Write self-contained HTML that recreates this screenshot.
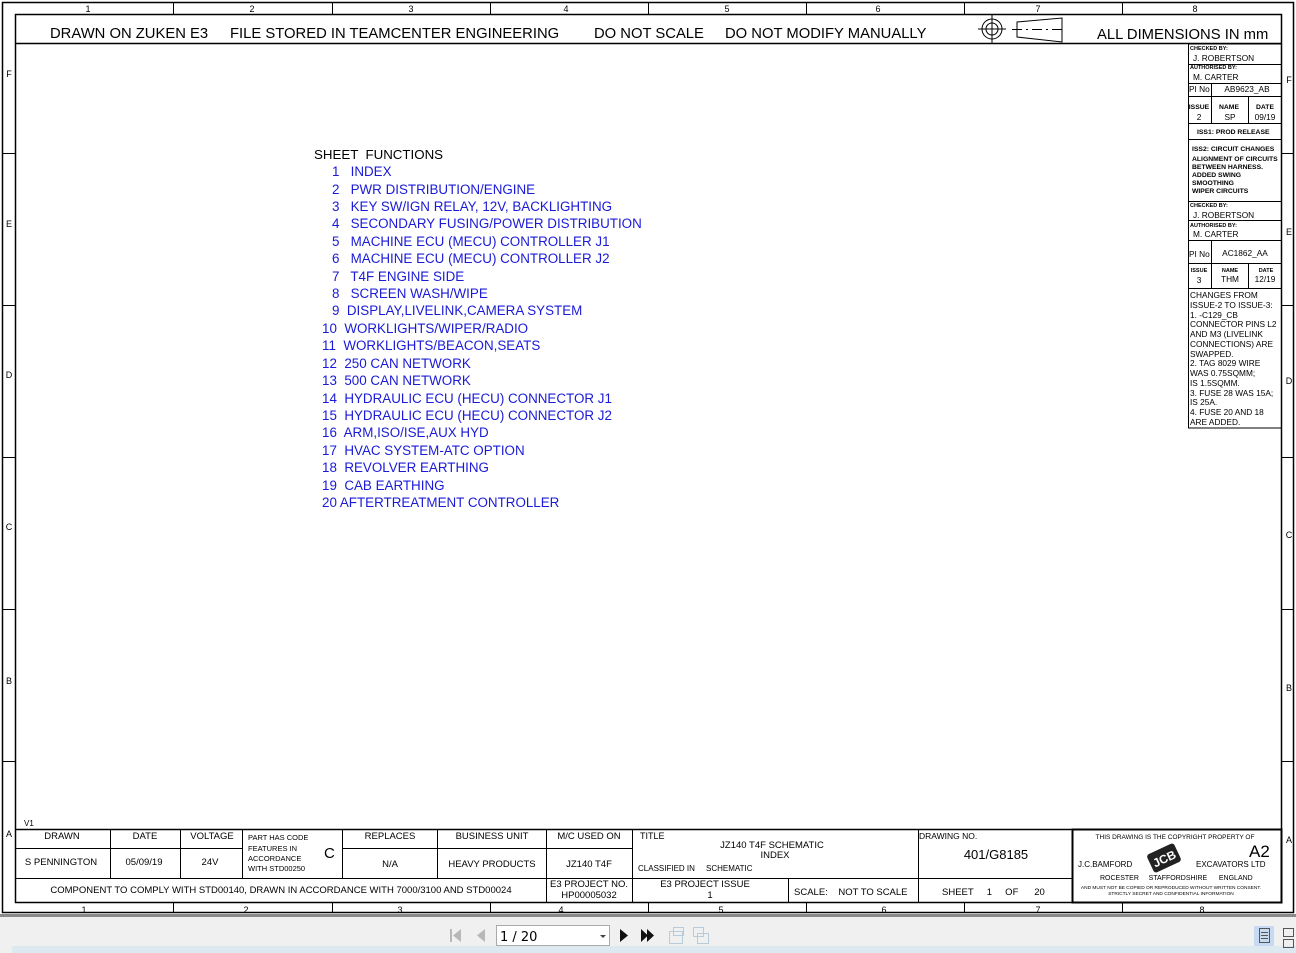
<!DOCTYPE html>
<html><head><meta charset="utf-8">
<style>
html,body{margin:0;padding:0;background:#fff;width:1296px;height:953px;overflow:hidden}
svg{display:block}
text{font-family:"Liberation Sans",Arial,sans-serif;fill:#000;white-space:pre}
.b text{fill:#1a1ad8}
</style></head><body>
<svg width="1296" height="953" viewBox="0 0 1296 953" xmlns="http://www.w3.org/2000/svg" xml:space="preserve">
<rect x="0" y="0" width="1296" height="953" fill="#fff"/>
<rect x="0" y="914" width="1296" height="39" fill="#f0f0f0"/>
<rect x="0" y="914" width="1296" height="3" fill="#8a8a8a"/>
<rect x="12" y="946" width="1284" height="7" fill="#dde9f1"/>
<g stroke="#000" fill="none">
<rect x="2.5" y="2.5" width="1291" height="910" stroke-width="1.5"/>
<rect x="15.5" y="14.5" width="1266" height="888" stroke-width="1.5"/>
<line x1="15" y1="43.5" x2="1282" y2="43.5" stroke-width="1.5"/>
<line x1="15" y1="829.5" x2="1282" y2="829.5" stroke-width="1.5"/>
<g stroke-width="1">
<line x1="173.5" y1="3" x2="173.5" y2="14"/><line x1="332.5" y1="3" x2="332.5" y2="14"/>
<line x1="490.5" y1="3" x2="490.5" y2="14"/><line x1="648.5" y1="3" x2="648.5" y2="14"/>
<line x1="806.5" y1="3" x2="806.5" y2="14"/><line x1="964.5" y1="3" x2="964.5" y2="14"/>
<line x1="1122.5" y1="3" x2="1122.5" y2="14"/>
<line x1="173.5" y1="902" x2="173.5" y2="912"/><line x1="332.5" y1="902" x2="332.5" y2="912"/>
<line x1="490.5" y1="902" x2="490.5" y2="912"/><line x1="648.5" y1="902" x2="648.5" y2="912"/>
<line x1="806.5" y1="902" x2="806.5" y2="912"/><line x1="964.5" y1="902" x2="964.5" y2="912"/>
<line x1="1122.5" y1="902" x2="1122.5" y2="912"/>
<line x1="3" y1="153.5" x2="15" y2="153.5"/><line x1="3" y1="305.5" x2="15" y2="305.5"/>
<line x1="3" y1="457.5" x2="15" y2="457.5"/><line x1="3" y1="609.5" x2="15" y2="609.5"/>
<line x1="3" y1="761.5" x2="15" y2="761.5"/>
<line x1="1282" y1="153.5" x2="1294" y2="153.5"/><line x1="1282" y1="305.5" x2="1294" y2="305.5"/>
<line x1="1282" y1="457.5" x2="1294" y2="457.5"/><line x1="1282" y1="609.5" x2="1294" y2="609.5"/>
<line x1="1282" y1="761.5" x2="1294" y2="761.5"/>
<line x1="15" y1="848.5" x2="242" y2="848.5"/>
<line x1="342" y1="848.5" x2="632" y2="848.5"/>
<line x1="15" y1="878.5" x2="1072" y2="878.5"/>
<line x1="110.5" y1="829" x2="110.5" y2="878"/><line x1="180.5" y1="829" x2="180.5" y2="878"/>
<line x1="242.5" y1="829" x2="242.5" y2="878"/><line x1="342.5" y1="829" x2="342.5" y2="878"/>
<line x1="437.5" y1="829" x2="437.5" y2="878"/><line x1="546.5" y1="829" x2="546.5" y2="902"/>
<line x1="632.5" y1="829" x2="632.5" y2="902"/><line x1="918.5" y1="829" x2="918.5" y2="902"/>
<line x1="788.5" y1="878" x2="788.5" y2="902"/>
<circle cx="992" cy="29" r="10"/><circle cx="992" cy="29" r="6"/>
<line x1="978" y1="29" x2="1006" y2="29"/><line x1="992" y1="15" x2="992" y2="43"/>
<path d="M1017 22 L1062 18 L1062 42 L1017 37 Z"/>
<line x1="1012" y1="29.5" x2="1066" y2="29.5" stroke-dasharray="10 4 2 4"/>
<rect x="1188.5" y="44" width="93" height="384"/>
<line x1="1188" y1="64.5" x2="1282" y2="64.5"/><line x1="1188" y1="83.5" x2="1282" y2="83.5"/>
<line x1="1188" y1="96.5" x2="1282" y2="96.5"/><line x1="1188" y1="123.5" x2="1282" y2="123.5"/>
<line x1="1188" y1="139.5" x2="1282" y2="139.5"/><line x1="1188" y1="201.5" x2="1282" y2="201.5"/>
<line x1="1188" y1="220.5" x2="1282" y2="220.5"/><line x1="1188" y1="240.5" x2="1282" y2="240.5"/>
<line x1="1188" y1="263.5" x2="1282" y2="263.5"/><line x1="1188" y1="288.5" x2="1282" y2="288.5"/>
<line x1="1211.5" y1="83" x2="1211.5" y2="123"/><line x1="1248.5" y1="96" x2="1248.5" y2="123"/>
<line x1="1211.5" y1="240" x2="1211.5" y2="288"/><line x1="1248.5" y1="263" x2="1248.5" y2="288"/>
</g>
<rect x="1072.5" y="829.5" width="209" height="73" stroke-width="2"/>
</g>
<g transform="translate(1164,858) rotate(-25)">
<rect x="-15" y="-10" width="30" height="20" rx="3" fill="#222"/>
<text x="0" y="5" font-size="12" font-weight="bold" text-anchor="middle" style="fill:#fff">JCB</text>
</g>
<g font-size="9" text-anchor="middle">
<text x="88" y="12">1</text><text x="252" y="12">2</text><text x="411" y="12">3</text><text x="566" y="12">4</text>
<text x="727" y="12">5</text><text x="878" y="12">6</text><text x="1038" y="12">7</text><text x="1195" y="12">8</text>
<text x="84" y="913">1</text><text x="246" y="913">2</text><text x="400" y="913">3</text><text x="561" y="913">4</text>
<text x="721" y="913">5</text><text x="884" y="913">6</text><text x="1038" y="913">7</text><text x="1202" y="913">8</text>
<text x="9" y="77">F</text><text x="9" y="227">E</text><text x="9" y="378">D</text><text x="9" y="530">C</text><text x="9" y="684">B</text><text x="9" y="837">A</text>
<text x="1289" y="83">F</text><text x="1289" y="235">E</text><text x="1289" y="384">D</text><text x="1289" y="538">C</text><text x="1289" y="691">B</text><text x="1289" y="843">A</text>
</g>
<g font-size="14.8">
<text x="50" y="38">DRAWN ON ZUKEN E3</text>
<text x="230" y="38">FILE STORED IN TEAMCENTER ENGINEERING</text>
<text x="594" y="38">DO NOT SCALE</text>
<text x="725" y="38">DO NOT MODIFY MANUALLY</text>
<text x="1097" y="39">ALL DIMENSIONS IN mm</text>
</g>
<text x="314" y="159" font-size="13.3">SHEET  FUNCTIONS</text>
<g class="b" font-size="13.4">
<text x="332" y="176">1   INDEX</text>
<text x="332" y="194">2   PWR DISTRIBUTION/ENGINE</text>
<text x="332" y="211">3   KEY SW/IGN RELAY, 12V, BACKLIGHTING</text>
<text x="332" y="228">4   SECONDARY FUSING/POWER DISTRIBUTION</text>
<text x="332" y="246">5   MACHINE ECU (MECU) CONTROLLER J1</text>
<text x="332" y="263">6   MACHINE ECU (MECU) CONTROLLER J2</text>
<text x="332" y="281">7   T4F ENGINE SIDE</text>
<text x="332" y="298">8   SCREEN WASH/WIPE</text>
<text x="332" y="315">9  DISPLAY,LIVELINK,CAMERA SYSTEM</text>
<text x="322" y="333">10  WORKLIGHTS/WIPER/RADIO</text>
<text x="322" y="350">11  WORKLIGHTS/BEACON,SEATS</text>
<text x="322" y="368">12  250 CAN NETWORK</text>
<text x="322" y="385">13  500 CAN NETWORK</text>
<text x="322" y="403">14  HYDRAULIC ECU (HECU) CONNECTOR J1</text>
<text x="322" y="420">15  HYDRAULIC ECU (HECU) CONNECTOR J2</text>
<text x="322" y="437">16  ARM,ISO/ISE,AUX HYD</text>
<text x="322" y="455">17  HVAC SYSTEM-ATC OPTION</text>
<text x="322" y="472">18  REVOLVER EARTHING</text>
<text x="322" y="490">19  CAB EARTHING</text>
<text x="322" y="507">20 AFTERTREATMENT CONTROLLER</text>
</g>
<g font-size="5.5" font-weight="bold">
<text x="1190" y="50">CHECKED BY:</text><text x="1190" y="69">AUTHORISED BY:</text>
<text x="1190" y="207">CHECKED BY:</text><text x="1190" y="227">AUTHORISED BY:</text>
</g>
<g font-size="8.3">
<text x="1193" y="61">J. ROBERTSON</text><text x="1193" y="80">M. CARTER</text>
<text x="1189" y="92">PI No</text><text x="1247" y="92" text-anchor="middle">AB9623_AB</text>
<text x="1193" y="218">J. ROBERTSON</text><text x="1193" y="237">M. CARTER</text>
<text x="1189" y="257">PI No</text><text x="1245" y="256" text-anchor="middle">AC1862_AA</text>
<text x="1199" y="120" text-anchor="middle">2</text><text x="1230" y="120" text-anchor="middle">SP</text><text x="1265" y="120" text-anchor="middle">09/19</text>
<text x="1199" y="283" text-anchor="middle">3</text><text x="1230" y="282" text-anchor="middle">THM</text><text x="1265" y="282" text-anchor="middle">12/19</text>
</g>
<g font-size="6.8" font-weight="bold">
<text x="1199" y="109" text-anchor="middle">ISSUE</text><text x="1229" y="109" text-anchor="middle">NAME</text><text x="1265" y="109" text-anchor="middle">DATE</text>
<text x="1199" y="272" text-anchor="middle" font-size="5.5">ISSUE</text><text x="1230" y="272" text-anchor="middle" font-size="5.5">NAME</text><text x="1266" y="272" text-anchor="middle" font-size="5.5">DATE</text>
<text x="1197" y="134">ISS1: PROD RELEASE</text>
<text x="1192" y="151">ISS2: CIRCUIT CHANGES</text>
<text x="1192" y="161">ALIGNMENT OF CIRCUITS</text>
<text x="1192" y="169">BETWEEN HARNESS.</text>
<text x="1192" y="177">ADDED SWING</text>
<text x="1192" y="185">SMOOTHING</text>
<text x="1192" y="193">WIPER CIRCUITS</text>
</g>
<g font-size="8.3">
<text x="1190" y="298">CHANGES FROM</text><text x="1190" y="308">ISSUE-2 TO ISSUE-3:</text>
<text x="1190" y="318">1. -C129_CB</text><text x="1190" y="327">CONNECTOR PINS L2</text>
<text x="1190" y="337">AND M3 (LIVELINK</text><text x="1190" y="347">CONNECTIONS) ARE</text>
<text x="1190" y="357">SWAPPED.</text><text x="1190" y="366">2. TAG 8029 WIRE</text>
<text x="1190" y="376">WAS 0.75SQMM;</text><text x="1190" y="386">IS 1.5SQMM.</text>
<text x="1190" y="396">3. FUSE 28 WAS 15A;</text><text x="1190" y="405">IS 25A.</text>
<text x="1190" y="415">4. FUSE 20 AND 18</text><text x="1190" y="425">ARE ADDED.</text>
</g>
<text x="24" y="826" font-size="8">V1</text>
<g font-size="9.5" text-anchor="middle">
<text x="62" y="839">DRAWN</text><text x="145" y="839">DATE</text><text x="212" y="839">VOLTAGE</text>
<text x="390" y="839">REPLACES</text><text x="492" y="839">BUSINESS UNIT</text><text x="589" y="839">M/C USED ON</text>
<text x="61" y="865">S PENNINGTON</text><text x="144" y="865">05/09/19</text><text x="210" y="865">24V</text>
<text x="390" y="867">N/A</text><text x="492" y="867">HEAVY PRODUCTS</text><text x="589" y="867">JZ140 T4F</text>
<text x="281" y="893">COMPONENT TO COMPLY WITH STD00140, DRAWN IN ACCORDANCE WITH 7000/3100 AND STD00024</text>
<text x="589" y="887">E3 PROJECT NO.</text><text x="589" y="898">HP00005032</text>
<text x="705" y="887">E3 PROJECT ISSUE</text><text x="710" y="898">1</text>
<text x="772" y="848">JZ140 T4F SCHEMATIC</text><text x="775" y="858">INDEX</text>
</g>
<g font-size="7.5">
<text x="248" y="840">PART HAS CODE</text><text x="248" y="851">FEATURES IN</text>
<text x="248" y="861">ACCORDANCE</text><text x="248" y="871">WITH STD00250</text>
</g>
<text x="324" y="858" font-size="15">C</text>
<text x="640" y="839" font-size="9">TITLE</text>
<text x="638" y="871" font-size="8">CLASSIFIED IN     SCHEMATIC</text>
<text x="919" y="839" font-size="8.5">DRAWING NO.</text>
<text x="996" y="859" font-size="13" text-anchor="middle">401/G8185</text>
<text x="794" y="895" font-size="9.5">SCALE:    NOT TO SCALE</text>
<text x="942" y="895" font-size="9.5">SHEET     1     OF      20</text>
<text x="1175" y="839" font-size="6.5" text-anchor="middle">THIS DRAWING IS THE COPYRIGHT PROPERTY OF</text>
<text x="1249" y="857" font-size="17">A2</text>
<text x="1078" y="867" font-size="8">J.C.BAMFORD</text>
<text x="1196" y="867" font-size="8">EXCAVATORS LTD</text>
<text x="1100" y="880" font-size="7">ROCESTER     STAFFORDSHIRE      ENGLAND</text>
<text x="1171" y="889" font-size="4.8" text-anchor="middle">AND MUST NOT BE COPIED OR REPRODUCED WITHOUT WRITTEN CONSENT.</text>
<text x="1171" y="895" font-size="4.8" text-anchor="middle">STRICTLY SECRET AND CONFIDENTIAL INFORMATION</text>
<g fill="#b8b8b8">
<rect x="450" y="929" width="2" height="13"/><path d="M461 929 L453 935.5 L461 942 Z"/>
<path d="M485 929 L477 935.5 L485 942 Z"/>
</g>
<rect x="496.5" y="925.5" width="113" height="20" fill="#fff" stroke="#aaa"/>
<text x="500" y="941" font-size="13" style="font-family:'DejaVu Sans',sans-serif">1 / 20</text>
<path d="M600 935 L606 935 L603 938 Z" fill="#444"/>
<g fill="#111">
<path d="M620 929 L628 935.5 L620 942 Z"/>
<path d="M641 929 L648 935.5 L641 942 Z"/><path d="M647 929 L654 935.5 L647 942 Z"/>
</g>
<g fill="none" stroke="#b8cbd8">
<rect x="669.5" y="931.5" width="13" height="12"/><rect x="673.5" y="927.5" width="10" height="8"/>
<rect x="693.5" y="927.5" width="10" height="9"/><rect x="697.5" y="933.5" width="11" height="10"/>
</g>
<rect x="1254" y="926" width="20" height="20" fill="#c6daf2"/>
<g fill="none" stroke="#555">
<rect x="1259.5" y="928.5" width="10" height="14"/>
<line x1="1261" y1="932.5" x2="1268" y2="932.5"/><line x1="1261" y1="935.5" x2="1268" y2="935.5"/><line x1="1261" y1="938.5" x2="1268" y2="938.5"/>
<rect x="1283.5" y="928.5" width="10" height="8"/><rect x="1283.5" y="939.5" width="10" height="8"/>
</g>
</svg>
</body></html>
